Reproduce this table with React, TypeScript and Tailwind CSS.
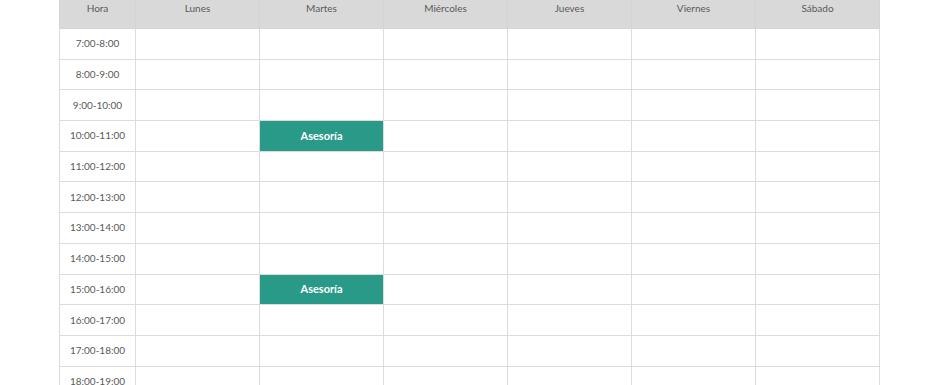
import React from "react";

const days = ["Lunes", "Martes", "Miércoles", "Jueves", "Viernes", "Sábado"];

const hours = [
  "7:00-8:00",
  "8:00-9:00",
  "9:00-10:00",
  "10:00-11:00",
  "11:00-12:00",
  "12:00-13:00",
  "13:00-14:00",
  "14:00-15:00",
  "15:00-16:00",
  "16:00-17:00",
  "17:00-18:00",
  "18:00-19:00",
];

// booked slots: hour -> day
const booked: Record<string, string> = {
  "10:00-11:00": "Martes",
  "15:00-16:00": "Martes",
};

const App: React.FC = () => {
  return (
    <div
      className="w-[945px] h-[385px] overflow-hidden bg-white"
      style={{ fontFamily: "Lato, 'Open Sans', sans-serif" }}
    >
      <div className="ml-[59px] -mt-[13px] w-[821px]">
        <table className="border-collapse table-fixed w-[821px] text-[10px] text-[#5a5a5a]">
          <colgroup>
            <col className="w-[76px]" />
            {days.map((d) => (
              <col key={d} className="w-[124px]" />
            ))}
          </colgroup>
          <thead>
            <tr className="h-[41px] bg-[#d9d9d9]">
              <th className="border border-[#d4d4d4] font-normal">Hora</th>
              {days.map((d) => (
                <th key={d} className="border border-[#d4d4d4] font-normal">
                  {d}
                </th>
              ))}
            </tr>
          </thead>
          <tbody>
            {hours.map((h) => (
              <tr key={h} className="h-[30.7px]">
                <td className="border border-[#dcdcdc] text-center">{h}</td>
                {days.map((d) =>
                  booked[h] === d ? (
                    <td
                      key={d}
                      className="border border-[#dcdcdc] bg-[#2a9a88] text-white text-center font-bold text-[11px]"
                    >
                      Asesoría
                    </td>
                  ) : (
                    <td key={d} className="border border-[#dcdcdc]" />
                  )
                )}
              </tr>
            ))}
          </tbody>
        </table>
      </div>
    </div>
  );
};

export default App;
